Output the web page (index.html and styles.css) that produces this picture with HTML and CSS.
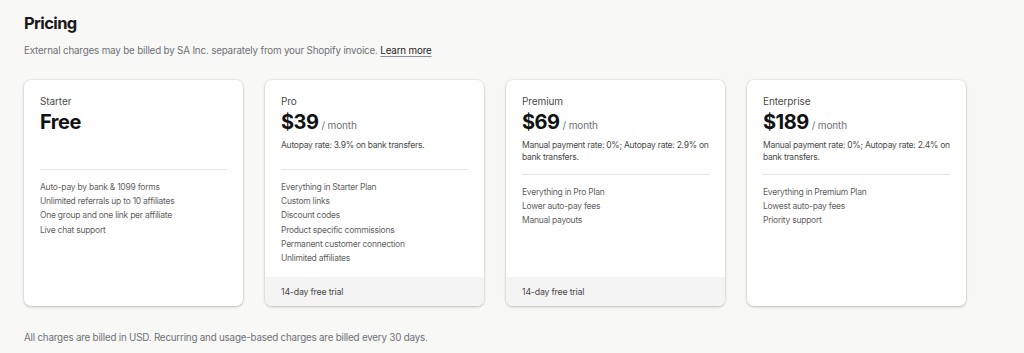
FILE: index.html
```html
<!DOCTYPE html>
<html>
<head>
<meta charset="utf-8">
<link rel="stylesheet" href="styles.css">
</head>
<body>
<main class="page">
  <h1 class="title">Pricing</h1>
  <p class="subtitle">External charges may be billed by SA Inc. separately from your Shopify invoice. <a class="link" href="#">Learn more</a></p>
  <div class="plans">
    <section class="card">
      <div class="card-body">
        <div class="card-head">
          <div class="plan-name">Starter</div>
          <div class="price"><span class="amount">Free</span></div>
        </div>
        <hr class="divider">
        <ul class="features">
          <li>Auto-pay by bank &amp; 1099 forms</li>
          <li>Unlimited referrals up to 10 affiliates</li>
          <li>One group and one link per affiliate</li>
          <li>Live chat support</li>
        </ul>
      </div>
    </section>
    <section class="card">
      <div class="card-body">
        <div class="card-head">
          <div class="plan-name">Pro</div>
          <div class="price"><span class="amount">$39</span><span class="period">/ month</span></div>
          <div class="desc">Autopay rate: 3.9% on bank transfers.</div>
        </div>
        <hr class="divider">
        <ul class="features">
          <li>Everything in Starter Plan</li>
          <li>Custom links</li>
          <li>Discount codes</li>
          <li>Product specific commissions</li>
          <li>Permanent customer connection</li>
          <li>Unlimited affiliates</li>
        </ul>
      </div>
      <div class="card-footer">14-day free trial</div>
    </section>
    <section class="card">
      <div class="card-body">
        <div class="card-head">
          <div class="plan-name">Premium</div>
          <div class="price"><span class="amount">$69</span><span class="period">/ month</span></div>
          <div class="desc">Manual payment rate: 0%; Autopay rate: 2.9% on bank transfers.</div>
        </div>
        <hr class="divider">
        <ul class="features">
          <li>Everything in Pro Plan</li>
          <li>Lower auto-pay fees</li>
          <li>Manual payouts</li>
        </ul>
      </div>
      <div class="card-footer">14-day free trial</div>
    </section>
    <section class="card">
      <div class="card-body">
        <div class="card-head">
          <div class="plan-name">Enterprise</div>
          <div class="price"><span class="amount">$189</span><span class="period">/ month</span></div>
          <div class="desc">Manual payment rate: 0%; Autopay rate: 2.4% on bank transfers.</div>
        </div>
        <hr class="divider">
        <ul class="features">
          <li>Everything in Premium Plan</li>
          <li>Lowest auto-pay fees</li>
          <li>Priority support</li>
        </ul>
      </div>
    </section>
  </div>
  <p class="note">All charges are billed in USD. Recurring and usage-based charges are billed every 30 days.</p>
</main>
</body>
</html>
```

FILE: styles.css
```css
* { box-sizing: border-box; }
html, body {
  margin: 0;
  background: #f8f8f7;
  font-family: Inter, "Noto Sans", sans-serif;
  color: #202223;
}
.page {
  padding: 13px 24px 0 24px;
  width: 990px;
}
.title {
  margin: 0;
  font-size: 16.5px;
  line-height: 20px;
  font-weight: 700;
  letter-spacing: -0.6px;
  color: #1a1a1a;
}
.subtitle {
  margin: 11px 0 0;
  font-size: 9.8px;
  line-height: 14px;
  letter-spacing: -0.17px;
  color: #6d7175;
}
.link {
  color: #202223;
  text-decoration: underline;
  text-decoration-color: #8c9196;
  text-underline-offset: 2px;
}
.plans {
  display: grid;
  grid-template-columns: repeat(4, 219px);
  gap: 22px;
  margin-top: 22px;
}
.card {
  background: #fff;
  border-radius: 7px;
  box-shadow: 0 0 0 1px rgba(0,0,0,0.03), 0 1px 3px rgba(0,0,0,0.22);
  display: flex;
  flex-direction: column;
  height: 226px;
  overflow: hidden;
}
.card-body {
  padding: 14px 16px 0;
  flex: 1;
}
.card-head {
  min-height: 64px;
}
.plan-name {
  font-size: 10px;
  line-height: 14px;
  letter-spacing: -0.1px;
  color: #4a4a4a;
}
.price {
  display: flex;
  align-items: baseline;
  gap: 3px;
  margin-top: 2px;
}
.amount {
  font-size: 20px;
  line-height: 24px;
  font-weight: 700;
  letter-spacing: -0.5px;
  color: #111213;
}
.period {
  font-size: 10px;
  letter-spacing: -0.15px;
  color: #6d7175;
}
.desc {
  margin-top: 6px;
  font-size: 8.5px;
  line-height: 11.5px;
  letter-spacing: -0.25px;
  color: #4a4a4a;
}
.divider {
  border: 0;
  border-top: 1px solid #e6e6e6;
  margin: 11px 0 10px;
}
.features {
  list-style: none;
  margin: 0;
  padding: 0;
  font-size: 8.5px;
  line-height: 14.2px;
  letter-spacing: -0.25px;
  color: #5f5f5f;
}
.card-footer {
  background: #f4f4f4;
  height: 29px;
  padding: 0 16px;
  display: flex;
  align-items: center;
  font-size: 8.8px;
  letter-spacing: -0.2px;
  color: #4a4a4a;
}
.note {
  margin: 25px 0 0;
  font-size: 9.8px;
  line-height: 14px;
  letter-spacing: -0.2px;
  color: #6d7175;
}
```
